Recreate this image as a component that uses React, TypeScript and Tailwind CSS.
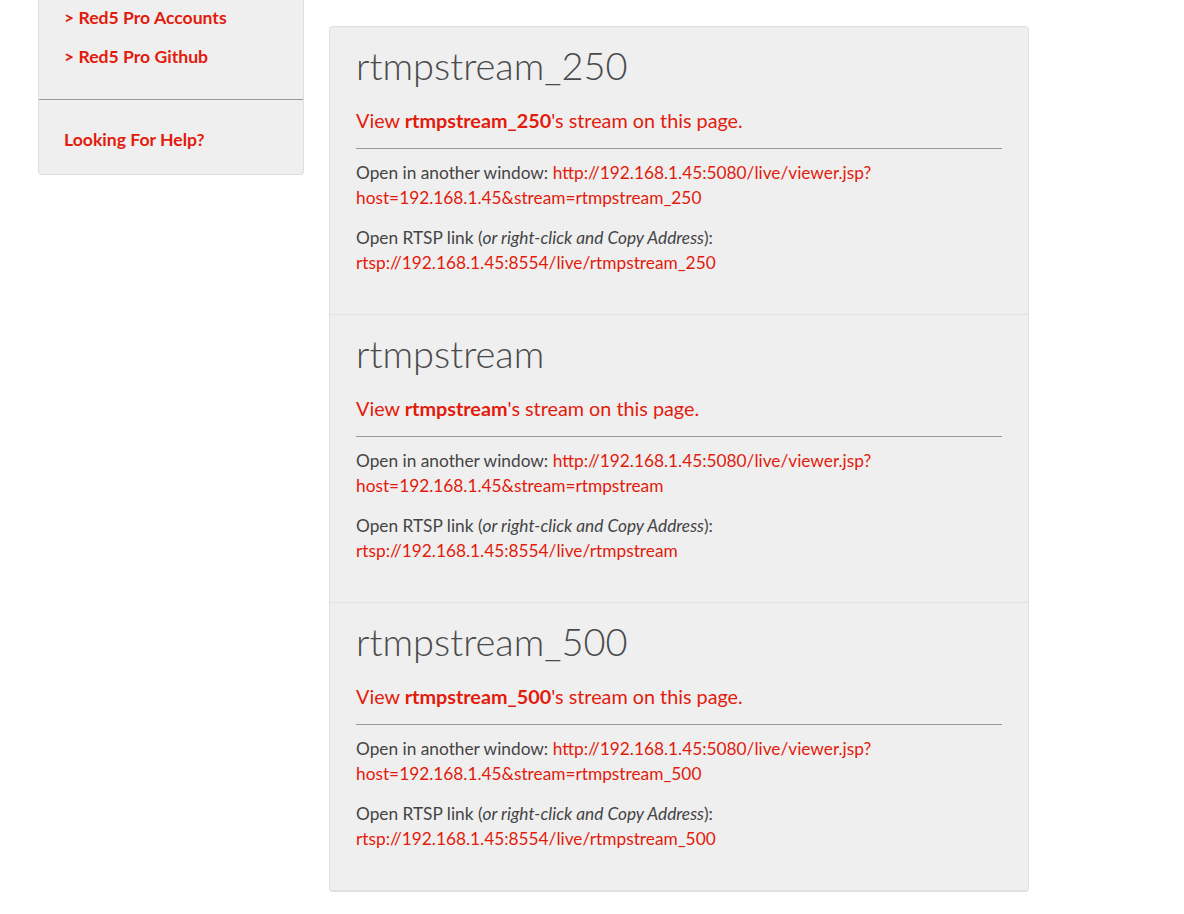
const streams = ['rtmpstream_250', 'rtmpstream', 'rtmpstream_500']
const host = '192.168.1.45'

function StreamItem({ name, last }: { name: string; last?: boolean }) {
  return (
    <div className={`px-[26px] pt-[17px] pb-[39px] ${last ? '' : 'border-b border-[#e2e2e2]'}`}>
      <h2 className="font-['Lato_Light','Lato',sans-serif] text-[38px] leading-[42px] font-light text-[#4a4a4a]">
        {name}
      </h2>
      <p className="mt-[20px] text-[19.8px] leading-[28px] text-[#e31b0c]">
        View <span className="font-bold">{name}</span>'s stream on this page.
      </p>
      <hr className="mt-[14px] border-0 border-t border-[#999]" />
      <p className="mt-[11px] text-[17.3px] leading-[25px] text-[#444]">
        Open in another window:{' '}
        <a className="text-[#e31b0c]">
          http://{host}:5080/live/viewer.jsp?<wbr />host={host}&amp;stream={name}
        </a>
      </p>
      <p className="mt-[15px] text-[17.3px] leading-[25px] text-[#444]">
        Open RTSP link (<i>or right-click and Copy Address</i>):
        <br />
        <a className="text-[#e31b0c]">rtsp://{host}:8554/live/{name}</a>
      </p>
    </div>
  )
}

export default function App() {
  return (
    <div className="min-h-screen bg-white font-['Lato','Liberation_Sans',sans-serif]">
      <div className="flex items-start gap-[25px] pl-[38px]">
        <aside className="w-[266px] shrink-0 rounded-b-[4px] border-x border-b border-[#dedede] bg-[#efefef]">
          <ul className="px-[25px] pt-[5px] pb-[29px] text-[17.6px] font-bold leading-[26px] text-[#e31b0c]">
            <li>&gt; Red5 Pro Accounts</li>
            <li className="mt-[13px]">&gt; Red5 Pro Github</li>
          </ul>
          <div className="border-t border-[#999]" />
          <div className="px-[25px] pt-[27px] pb-[21px] text-[17.6px] font-bold leading-[26px] text-[#e31b0c]">
            Looking For Help?
          </div>
        </aside>
        <main className="mt-[26px] mb-[24px] w-[700px] rounded-[4px] border border-b-2 border-[#e0e0e0] bg-[#efefef]">
          {streams.map((s, i) => (
            <StreamItem key={s} name={s} last={i === streams.length - 1} />
          ))}
        </main>
      </div>
    </div>
  )
}
